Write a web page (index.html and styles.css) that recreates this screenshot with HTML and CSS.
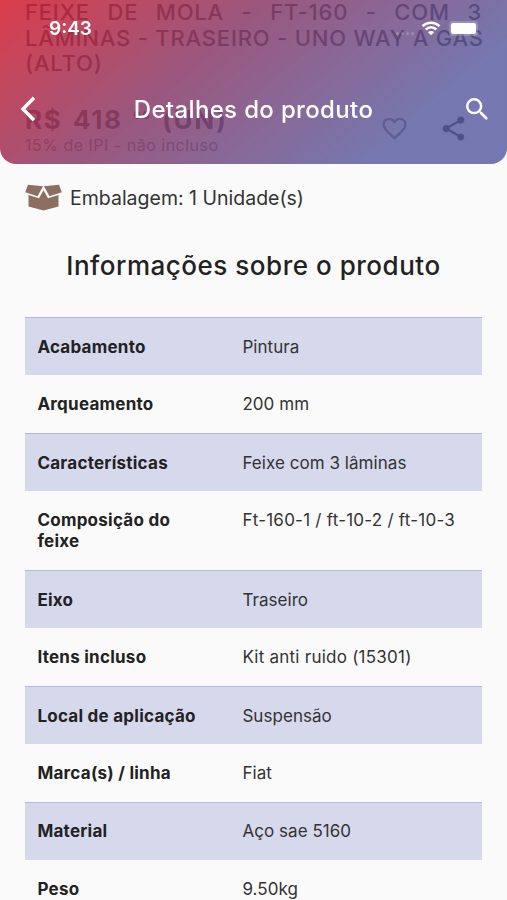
FILE: index.html
```html
<!DOCTYPE html>
<html lang="pt-BR">
<head>
    <meta charset="UTF-8">
    <meta name="viewport" content="width=device-width, initial-scale=1.0">
    <title>Detalhes do produto</title>
    <link rel="stylesheet" href="styles.css">
</head>
<body>

    <!-- App bar, stays over the scrolled content -->
    <header class="app-bar">
        <div class="status-bar">
            <span class="time">9:43</span>
            <span class="signal"><i></i><i></i><i></i><i></i></span>
            <svg class="wifi" viewBox="0 0 20 15" width="20" height="15">
                <path d="M1.5 5.2a12.2 12.2 0 0 1 17 0M4.700 8.500a7.600 7.600 0 0 1 10.600 0" fill="none" stroke="#fff" stroke-width="2.500"/>
                <path d="M10 14.300l-3.100-3.100a4.400 4.400 0 0 1 6.200 0z" fill="#fff"/>
            </svg>
            <span class="battery"></span>
        </div>
        <div class="toolbar">
            <svg class="back" viewBox="0 0 16 26" width="16" height="26">
                <path d="M14 1.800L3 13l11 11.200" fill="none" stroke="#fff" stroke-width="3.400"/>
            </svg>
            <h1>Detalhes do produto</h1>
            <svg class="search" viewBox="3 3 17.500 17.500" width="22" height="22">
                <path fill="#fff" d="M15.500 14h-.79l-.28-.27A6.471 6.471 0 0 0 16 9.500 6.500 6.500 0 1 0 9.500 16c1.610 0 3.090-.59 4.230-1.570l.27.28v.79l5 4.990L20.490 19l-4.990-5zm-6 0C7.010 14 5 11.990 5 9.500S7.010 5 9.500 5 14 7.010 14 9.500 11.990 14 9.500 14z"/>
            </svg>
        </div>
    </header>

    <main class="content">
        <h2 class="product-name">
            <span>FEIXE DE MOLA - FT-160 - COM 3</span>
            <span>LÂMINAS - TRASEIRO - UNO WAY A GAS</span>
            <span>(ALTO)</span>
        </h2>

        <div class="price-row">
            <div>
                <p class="price">R$ 418 <sup>00</sup> (UN)</p>
                <p class="tax">15% de IPI - não incluso</p>
            </div>
            <div class="actions">
                <svg viewBox="0 0 24 24" width="29" height="29">
                    <path fill="#6a6a6a" d="M16.500 3c-1.740 0-3.410.81-4.500 2.090C10.910 3.810 9.240 3 7.500 3 4.420 3 2 5.420 2 8.500c0 3.780 3.400 6.860 8.550 11.540L12 21.350l1.450-1.320C18.600 15.360 22 12.280 22 8.500 22 5.420 19.580 3 16.500 3zm-4.400 15.550l-.1.100-.1-.1C7.140 14.240 4 11.390 4 8.500 4 6.500 5.500 5 7.500 5c1.540 0 3.040.99 3.570 2.360h1.870C13.460 5.990 14.960 5 16.500 5c2 0 3.500 1.500 3.500 3.500 0 2.890-3.140 5.740-7.900 10.050z"/>
                </svg>
                <svg viewBox="0 0 24 24" width="29" height="29">
                    <path fill="#222" d="M18 16.080c-.76 0-1.440.3-1.960.77L8.910 12.700c.05-.23.09-.46.09-.7s-.04-.47-.09-.7l7.050-4.110c.54.5 1.250.81 2.040.81 1.660 0 3-1.340 3-3s-1.340-3-3-3-3 1.340-3 3c0 .24.040.47.090.7L8.040 9.810C7.500 9.310 6.790 9 6 9c-1.660 0-3 1.340-3 3s1.340 3 3 3c.79 0 1.500-.31 2.040-.81l7.120 4.160c-.05.21-.08.43-.08.65 0 1.610 1.310 2.920 2.920 2.920s2.920-1.310 2.920-2.920-1.310-2.920-2.920-2.920z"/>
                </svg>
            </div>
        </div>

        <div class="package">
            <svg viewBox="0 0 37 27" width="37" height="27">
                <path fill="#8d6e63" d="M3 .8L18 2.300 12.500 12.200 .2 8.300zM34 .8L19 2.300l5.500 9.900 12.300-3.900zM3.500 11l10.500 3.300 4.500-8.100 4.500 8.100L33.500 11v11.500l-15 4-15-4z"/>
            </svg>
            <span>Embalagem: 1 Unidade(s)</span>
        </div>

        <h2 class="section-title">Informações sobre o produto</h2>

        <dl class="specs">
            <div class="row"><dt>Acabamento</dt><dd>Pintura</dd></div>
            <div class="row"><dt>Arqueamento</dt><dd>200 mm</dd></div>
            <div class="row"><dt>Características</dt><dd>Feixe com 3 lâminas</dd></div>
            <div class="row"><dt>Composição do feixe</dt><dd class="codes">Ft-160-1 / ft-10-2 / ft-10-3</dd></div>
            <div class="row"><dt>Eixo</dt><dd>Traseiro</dd></div>
            <div class="row"><dt>Itens incluso</dt><dd class="codes">Kit anti ruido (15301)</dd></div>
            <div class="row"><dt>Local de aplicação</dt><dd>Suspensão</dd></div>
            <div class="row"><dt>Marca(s) / linha</dt><dd>Fiat</dd></div>
            <div class="row"><dt>Material</dt><dd>Aço sae 5160</dd></div>
            <div class="row"><dt>Peso</dt><dd>9.50kg</dd></div>
        </dl>
    </main>

</body>
</html>
```
FILE: styles.css
```css
* {
    box-sizing: border-box;
}

body {
    font-family: Inter, Arial, sans-serif;
    margin: 0;
    height: 900px;
    overflow: hidden;
    background-color: #fafafa;
    color: #222;
}

h1, h2, p, dl, dd {
    margin: 0;
}

/* App bar */
.app-bar {
    position: fixed;
    top: 0;
    left: 0;
    width: 100%;
    height: 164px;
    z-index: 1;
    border-radius: 0 0 16px 16px;
    background: linear-gradient(140deg, rgba(214, 34, 50, 0.88), rgba(140, 62, 106, 0.87) 38%, rgba(88, 92, 160, 0.82) 80%);
    color: #fff;
}

.status-bar {
    display: flex;
    align-items: center;
    height: 56px;
    padding: 0 29px 0 49px;
}

.time {
    flex: 1;
    font-size: 19px;
    font-weight: 600;
}

.signal {
    display: flex;
    gap: 2px;
    margin: 11px 7px 0 0;
}

.signal i {
    width: 3px;
    height: 3px;
    border-radius: 50%;
    background-color: rgba(255, 255, 255, 0.2);
}

.battery {
    width: 29px;
    height: 15px;
    margin-left: 8px;
    border: 2px solid rgba(255, 255, 255, 0.2);
    border-radius: 4px;
    background-color: #fff;
    background-clip: padding-box;
}

.toolbar {
    display: flex;
    align-items: center;
    justify-content: space-between;
    height: 106px;
    padding: 0 19px 0 20px;
}

.toolbar h1 {
    margin-left: 5px;
    font-size: 24px;
    font-weight: 500;
    letter-spacing: 0.35px;
}

/* Content */
.content {
    padding: 0 25px;
}

.product-name {
    font-size: 22px;
    font-weight: 500;
    line-height: 25.5px;
    letter-spacing: 0.8px;
}

.product-name span {
    display: block;
    white-space: nowrap;
    text-align-last: justify;
}

.product-name span:last-child {
    text-align-last: left;
}

.price-row {
    display: flex;
    justify-content: space-between;
    margin-top: 27px;
}

.price {
    font-size: 26px;
    font-weight: 700;
    line-height: 32px;
    letter-spacing: 1.6px;
    word-spacing: 3px;
    color: #333;
}

.price sup {
    font-size: 11px;
    line-height: 0;
}

.tax {
    font-size: 16px;
    line-height: 18px;
    color: #666;
    letter-spacing: 0.5px;
}

.actions {
    display: flex;
    gap: 30px;
    padding: 10px 14px 0 0;
}

.package {
    display: flex;
    align-items: center;
    gap: 8px;
    height: 28px;
    margin-top: 30px;
    font-size: 19.5px;
    color: #333;
}

.section-title {
    margin: 38px 0 35.5px;
    font-size: 26px;
    font-weight: 500;
    line-height: 32px;
    letter-spacing: 0.52px;
    text-align: center;
}

/* Specification table */
.specs {
    margin-left: 0.4px;
}

.row {
    display: flex;
    padding: 18.600px 12px 17.900px;
    font-size: 17px;
    line-height: 21px;
}

.row:nth-child(odd) {
    border-top: 1.500px solid #b4b8e0;
    background-color: #d6d8ec;
}

.row dt {
    flex: 0 0 205px;
    padding-right: 40px;
    font-weight: 700;
    letter-spacing: 0.25px;
}

.row dd {
    color: #333;
    letter-spacing: 0.05px;
}

.row dd.codes {
    letter-spacing: 0.24px;
}
```
